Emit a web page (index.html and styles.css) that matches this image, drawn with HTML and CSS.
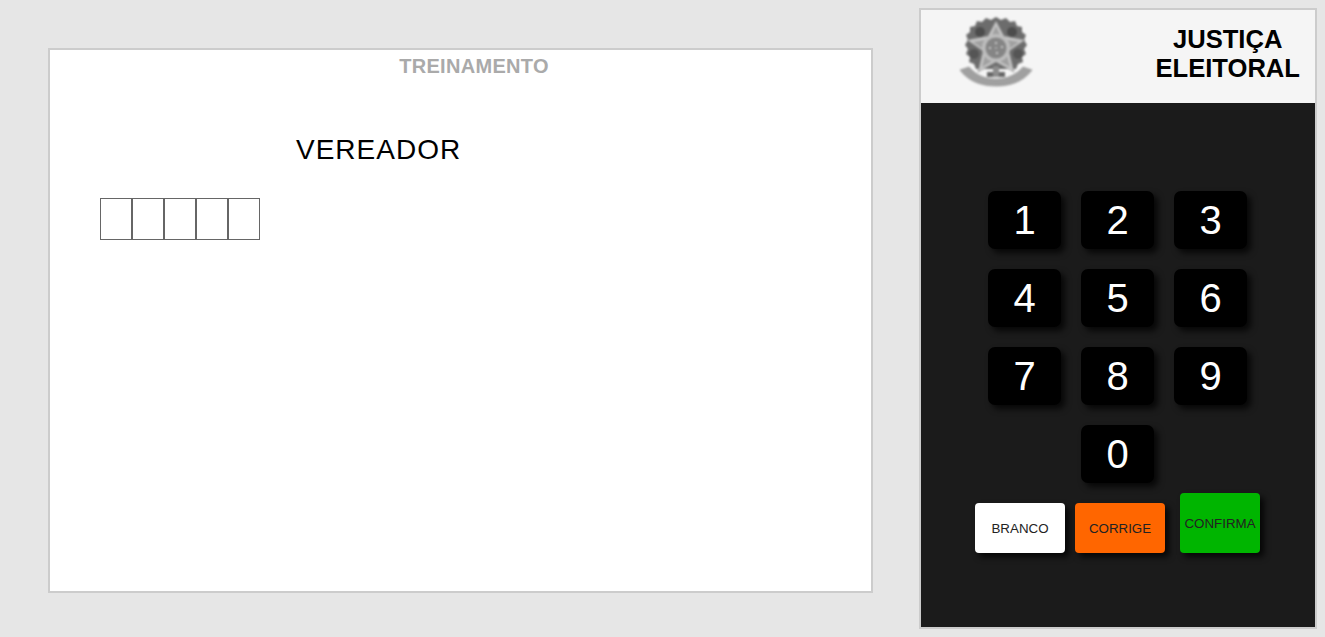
FILE: index.html
```html
<!DOCTYPE html>
<html lang="pt-BR">

<head>
  <meta charset="UTF-8" />
  <title>Urna Eletronica</title>
  <link rel="stylesheet" href="styles.css">
</head>

<body>

  <div class="screen">
    <div class="training">TREINAMENTO</div>
    <h2 class="office">VEREADOR</h2>
    <div class="digits">
      <div class="digit"></div>
      <div class="digit"></div>
      <div class="digit"></div>
      <div class="digit"></div>
      <div class="digit"></div>
    </div>
  </div>

  <div class="panel">
    <div class="panel-head">
      <!-- brasao -->
      <svg class="emblem" width="73" height="71" viewBox="0 0 73 71">
        <path d="M36 1 L41 4 L46 2 L50 6 L55 5 L57 10 L62 11 L62 16 L66 19 L64 24 L67 29 L64 33 L66 38 L62 41 L63 46 L58 48 L56 53 L16 53 L14 48 L9 46 L10 41 L6 38 L8 33 L5 29 L8 24 L6 19 L10 16 L10 11 L15 10 L17 5 L22 6 L26 2 L31 4 Z" fill="#6c6c6c" />
        <circle cx="20" cy="16" r="5" fill="#4c4c4c" />
        <circle cx="52" cy="16" r="5" fill="#4c4c4c" />
        <circle cx="14" cy="38" r="5" fill="#555" />
        <circle cx="58" cy="38" r="5" fill="#555" />
        <path d="M0 54 L9 51 C17 60 26 63 36 63 C46 63 55 60 63 51 L72 54 C63 66 50 70 36 70 C22 70 9 66 0 54 Z" fill="#a0a0a0" stroke="#8a8a8a" stroke-width="0.6" />
        <rect x="27" y="56" width="18" height="5" fill="#666" />
        <rect x="33" y="50" width="6" height="11" fill="#8c8c8c" />
        <polygon points="36,5 44,20 65,24 49,35 54,56 36,46 18,56 23,35 7,24 28,20" fill="#c6c6c6" stroke="#8f8f8f" stroke-width="0.7" />
        <polygon points="36,10 42,23 59,26 46,35 50,51 36,43 22,51 26,35 13,26 30,23" fill="#a0a0a0" />
        <circle cx="36" cy="32" r="14" fill="#bdbdbd" />
        <circle cx="36" cy="32" r="10.5" fill="#858585" />
        <circle cx="36" cy="27" r="1.1" fill="#ddd" />
        <circle cx="30" cy="32" r="1.1" fill="#ddd" />
        <circle cx="42" cy="31" r="1.1" fill="#ddd" />
        <circle cx="37" cy="37" r="1.1" fill="#ddd" />
        <circle cx="36" cy="32" r="0.8" fill="#ddd" />
      </svg>
      <h1 class="brand">JUSTIÇA<br>ELEITORAL</h1>
    </div>

    <div class="panel-body">
      <div class="keypad">
        <button class="key">1</button>
        <button class="key">2</button>
        <button class="key">3</button>
        <button class="key">4</button>
        <button class="key">5</button>
        <button class="key">6</button>
        <button class="key">7</button>
        <button class="key">8</button>
        <button class="key">9</button>
        <button class="key key-zero">0</button>
      </div>
      <div class="actions">
        <button class="action white">BRANCO</button>
        <button class="action orange">CORRIGE</button>
        <button class="action green">CONFIRMA</button>
      </div>
    </div>
  </div>

</body>

</html>
```

FILE: styles.css
```css
body {
  margin: 0;
  padding: 8px 0 8px 48px;
  height: 637px;
  box-sizing: border-box;
  overflow: hidden;
  display: flex;
  align-items: flex-start;
  gap: 46px;
  background: #e6e6e6;
  font-family: "Liberation Sans", Arial, sans-serif;
}

.screen {
  width: 825px;
  height: 545px;
  box-sizing: border-box;
  margin-top: 40px;
  background: #fff;
  border: 2px solid #ccc;
}

.training {
  margin-top: 5px;
  padding-left: 27px;
  text-align: center;
  font-size: 20px;
  line-height: 23px;
  font-weight: bold;
  letter-spacing: 0.3px;
  color: #aaa;
}

.office {
  margin: 56px 0 0 246px;
  font-size: 28px;
  line-height: 32px;
  font-weight: normal;
  letter-spacing: 1px;
  color: #000;
}

.digits {
  display: flex;
  margin: 32px 0 0 50px;
}

.digit {
  width: 32px;
  height: 42px;
  box-sizing: border-box;
  border: 1px solid #666;
}

.panel {
  width: 398px;
  height: 621px;
  box-sizing: border-box;
  display: flex;
  flex-direction: column;
  background: #1b1b1b;
  border: 2px solid #ccc;
}

.panel-head {
  height: 93px;
  flex-shrink: 0;
  display: flex;
  justify-content: space-between;
  padding: 6px 15px 0 39px;
  box-sizing: border-box;
  background: #f5f5f5;
}

.emblem {
  filter: blur(0.8px);
}

.brand {
  margin: 9px 0 0;
  font-size: 25.6px;
  line-height: 29px;
  font-weight: bold;
  text-align: center;
  color: #000;
}

.panel-body {
  padding-top: 88px;
}

.keypad {
  display: grid;
  grid-template-columns: repeat(3, 73px);
  grid-auto-rows: 58px;
  gap: 20px;
  justify-content: center;
  padding-right: 1px;
}

.key {
  padding: 0;
  border: none;
  border-radius: 7px;
  background: #000;
  color: #fff;
  font-family: inherit;
  font-size: 40px;
  box-shadow: 4px 4px 6px rgba(0, 0, 0, 0.75);
}

.key-zero {
  grid-column: 2;
}

.actions {
  display: flex;
  align-items: flex-end;
  gap: 10px;
  margin: 10px 0 0 54px;
}

.action {
  width: 90px;
  height: 50px;
  padding: 0;
  border: none;
  border-radius: 4px;
  color: #222;
  font-family: inherit;
  font-size: 13.33px;
  box-shadow: 4px 4px 6px rgba(0, 0, 0, 0.8);
}

.white {
  background: #fff;
}

.orange {
  background: #f60;
}

.green {
  width: 80px;
  height: 60px;
  margin-left: 5px;
  background: #00b500;
}
```
